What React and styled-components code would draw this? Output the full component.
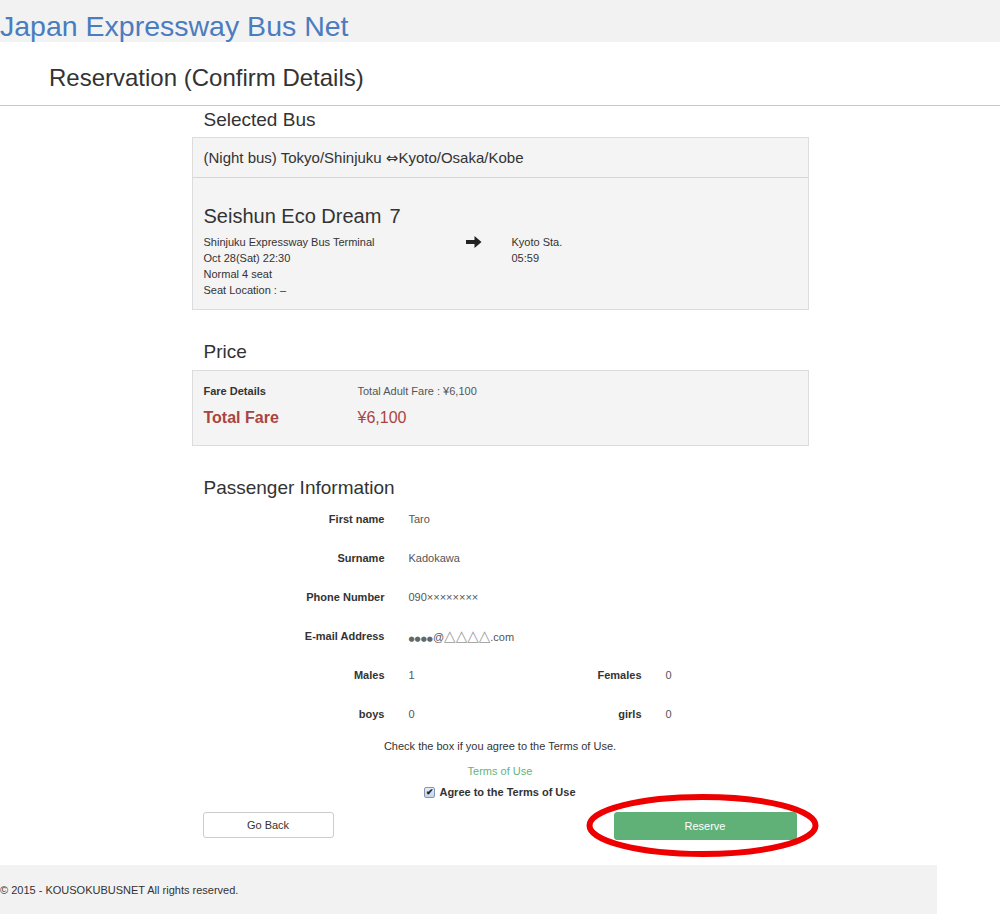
import React from "react";
import styled, { createGlobalStyle } from "styled-components";

const Global = createGlobalStyle`
  html, body { margin: 0; padding: 0; background: #fff; }
  body { font-family: "Liberation Sans", Arial, sans-serif; color: #333; }
  * { box-sizing: border-box; }
`;

const TopBar = styled.header`
  background: #f2f2f2;
  height: 42px;
  display: flex;
  align-items: flex-end;
`;

const SiteTitle = styled.h1`
  margin: 0;
  font-weight: normal;
  font-size: 28.5px;
  line-height: 42px;
  color: #4a7cc0;
  white-space: nowrap;
  transform: translateY(5px);
`;

const PageHead = styled.div`
  height: 64px;
  border-bottom: 1px solid #c8c8c8;
  display: flex;
  align-items: center;
  padding-left: 49px;
`;

const PageTitle = styled.h2`
  margin: 0;
  font-weight: normal;
  font-size: 24px;
  color: #333;
  transform: translateY(4px);
`;

const Main = styled.main`
  width: 617px;
  margin: 0 auto;
`;

const SectionHeading = styled.h3`
  margin: ${(p) => p.$top || 0}px 0 ${(p) => p.$bottom ?? 4}px;
  padding: 0 12px;
  font-weight: normal;
  font-size: 19px;
  line-height: 28px;
  color: #333;
`;

const Panel = styled.section`
  background: #f4f4f4;
  border: 1px solid #dcdcdc;
`;

const RouteHeader = styled.div`
  height: 40px;
  padding: 0 11px;
  display: flex;
  align-items: center;
  font-size: 15px;
  color: #333;
  border-bottom: 1px solid #d6d6d6;
  white-space: pre;
`;

const Symbol = styled.span`
  font-family: "DejaVu Sans", sans-serif;
  font-size: ${(p) => p.$size || 14}px;
  color: ${(p) => p.$color || "inherit"};
`;

const BusBody = styled.div`
  padding: 24px 11px 11px;
`;

const BusName = styled.div`
  font-size: 20px;
  line-height: 28px;
  color: #333;
  margin-bottom: 4px;
`;

const BusNo = styled.span`
  margin-left: 8px;
`;

const BusGrid = styled.div`
  display: grid;
  grid-template-columns: 262px 46px 1fr;
  font-size: 11px;
  line-height: 16px;
  color: #333;
`;

const ArrowCell = styled.div`
  padding-top: 1px;
`;

const FarePanel = styled(Panel)`
  padding: 12px 11px 16px;
  display: grid;
  grid-template-columns: 154px 1fr;
  row-gap: 8px;
  align-items: center;
`;

const FareLabel = styled.div`
  font-size: 11px;
  font-weight: bold;
  line-height: 16px;
  color: #333;
`;

const FareValue = styled.div`
  font-size: 11px;
  line-height: 16px;
  color: #555;
`;

const TotalLabel = styled.div`
  font-size: 16px;
  font-weight: bold;
  line-height: 22px;
  color: #a94442;
`;

const TotalValue = styled.div`
  font-size: 16px;
  line-height: 22px;
  color: #a94442;
`;

const InfoGrid = styled.div`
  display: grid;
  grid-template-columns: 193px 100px 109px 1fr;
  column-gap: 24px;
  grid-auto-rows: 39px;
  align-items: center;
  margin-top: -7px;
`;

const InfoLabel = styled.div`
  text-align: right;
  font-size: 11px;
  font-weight: bold;
  color: #333;
`;

const InfoValue = styled.div`
  font-size: 11px;
  color: #555;
  grid-column: ${(p) => (p.$wide ? "2 / 5" : "auto")};
`;

const Notice = styled.p`
  margin: 5px 0 0;
  text-align: center;
  font-size: 11px;
  line-height: 16px;
  color: #333;
`;

const TermsLink = styled.a`
  display: block;
  margin-top: 9px;
  text-align: center;
  font-size: 11px;
  line-height: 16px;
  color: #62b47d;
  text-decoration: none;
`;

const AgreeRow = styled.label`
  margin-top: 5px;
  display: flex;
  justify-content: center;
  align-items: center;
  gap: 4px;
  font-size: 11px;
  font-weight: bold;
  line-height: 16px;
  color: #333;
`;

const CheckBox = styled.span`
  width: 11px;
  height: 11px;
  border: 1px solid #8494b8;
  border-radius: 2px;
  background: linear-gradient(#e8edf6, #c9d3e6);
  display: inline-flex;
  align-items: center;
  justify-content: center;
  font-size: 9px;
  line-height: 1;
  color: #222;
`;

const ButtonRow = styled.div`
  position: relative;
  margin-top: 12px;
  padding: 0 12px 0 11px;
  display: flex;
  justify-content: space-between;
  align-items: flex-start;
`;

const Button = styled.button`
  font-family: "Liberation Sans", Arial, sans-serif;
  font-size: 11px;
  cursor: pointer;
  border-radius: 3px;
  width: ${(p) => (p.$primary ? 183 : 131)}px;
  height: ${(p) => (p.$primary ? 28 : 26)}px;
  background: ${(p) => (p.$primary ? "#60b178" : "#fff")};
  color: ${(p) => (p.$primary ? "#fff" : "#333")};
  border: 1px solid ${(p) => (p.$primary ? "#60b178" : "#ccc")};
  padding: 0;
`;

const Highlight = styled.svg`
  position: absolute;
  left: 394px;
  top: -18px;
  width: 233px;
  height: 63px;
  pointer-events: none;
  overflow: visible;
`;

const Footer = styled.footer`
  margin-top: 25px;
  width: 937px;
  height: 49px;
  background: #f2f2f2;
  display: flex;
  align-items: center;
  font-size: 11px;
  color: #333;
`;

const Arrow = () => (
  <svg width="16" height="14" viewBox="0 0 16 14">
    <path d="M0 5 H8.5 V1 L15.5 7 L8.5 13 V9 H0 Z" fill="#222" />
  </svg>
);

const rows = [
  ["First name", "Taro"],
  ["Surname", "Kadokawa"],
  ["Phone Number", "090××××××××"],
  [
    "E-mail Address",
    <>
      <Symbol $size={7} $color="#666">●●●●</Symbol>@<Symbol $size={15} $color="#999">△△△△</Symbol>.com
    </>,
  ],
];

export default function App() {
  return (
    <>
      <Global />
      <TopBar>
        <SiteTitle>Japan Expressway Bus Net</SiteTitle>
      </TopBar>
      <PageHead>
        <PageTitle>Reservation (Confirm Details)</PageTitle>
      </PageHead>
      <Main>
        <SectionHeading $bottom={3}>Selected Bus</SectionHeading>
        <Panel>
          <RouteHeader>
            (Night bus) Tokyo/Shinjuku <Symbol $size={15}>⇔</Symbol>Kyoto/Osaka/Kobe
          </RouteHeader>
          <BusBody>
            <BusName>
              Seishun Eco Dream<BusNo>7</BusNo>
            </BusName>
            <BusGrid>
              <div>
                Shinjuku Expressway Bus Terminal
                <br />
                Oct 28(Sat) 22:30
                <br />
                Normal 4 seat
                <br />
                Seat Location : –
              </div>
              <ArrowCell>
                <Arrow />
              </ArrowCell>
              <div>
                Kyoto Sta.
                <br />
                05:59
              </div>
            </BusGrid>
          </BusBody>
        </Panel>

        <SectionHeading $top={28}>Price</SectionHeading>
        <FarePanel>
          <FareLabel>Fare Details</FareLabel>
          <FareValue>Total Adult Fare : ¥6,100</FareValue>
          <TotalLabel>Total Fare</TotalLabel>
          <TotalValue>¥6,100</TotalValue>
        </FarePanel>

        <SectionHeading $top={28}>Passenger Information</SectionHeading>
        <InfoGrid>
          {rows.map(([l, v]) => (
            <React.Fragment key={l}>
              <InfoLabel>{l}</InfoLabel>
              <InfoValue $wide>{v}</InfoValue>
            </React.Fragment>
          ))}
          <InfoLabel>Males</InfoLabel>
          <InfoValue>1</InfoValue>
          <InfoLabel>Females</InfoLabel>
          <InfoValue>0</InfoValue>
          <InfoLabel>boys</InfoLabel>
          <InfoValue>0</InfoValue>
          <InfoLabel>girls</InfoLabel>
          <InfoValue>0</InfoValue>
        </InfoGrid>

        <Notice>Check the box if you agree to the Terms of Use.</Notice>
        <TermsLink href="#">Terms of Use</TermsLink>
        <AgreeRow>
          <CheckBox>✔</CheckBox>
          Agree to the Terms of Use
        </AgreeRow>

        <ButtonRow>
          <Button>Go Back</Button>
          <Button $primary>Reserve</Button>
          <Highlight viewBox="0 0 233 63">
            <ellipse cx="116.5" cy="31.5" rx="113" ry="28.5" fill="none" stroke="#ee0000" strokeWidth="6" />
          </Highlight>
        </ButtonRow>
      </Main>
      <Footer>© 2015 - KOUSOKUBUSNET All rights reserved.</Footer>
    </>
  );
}
